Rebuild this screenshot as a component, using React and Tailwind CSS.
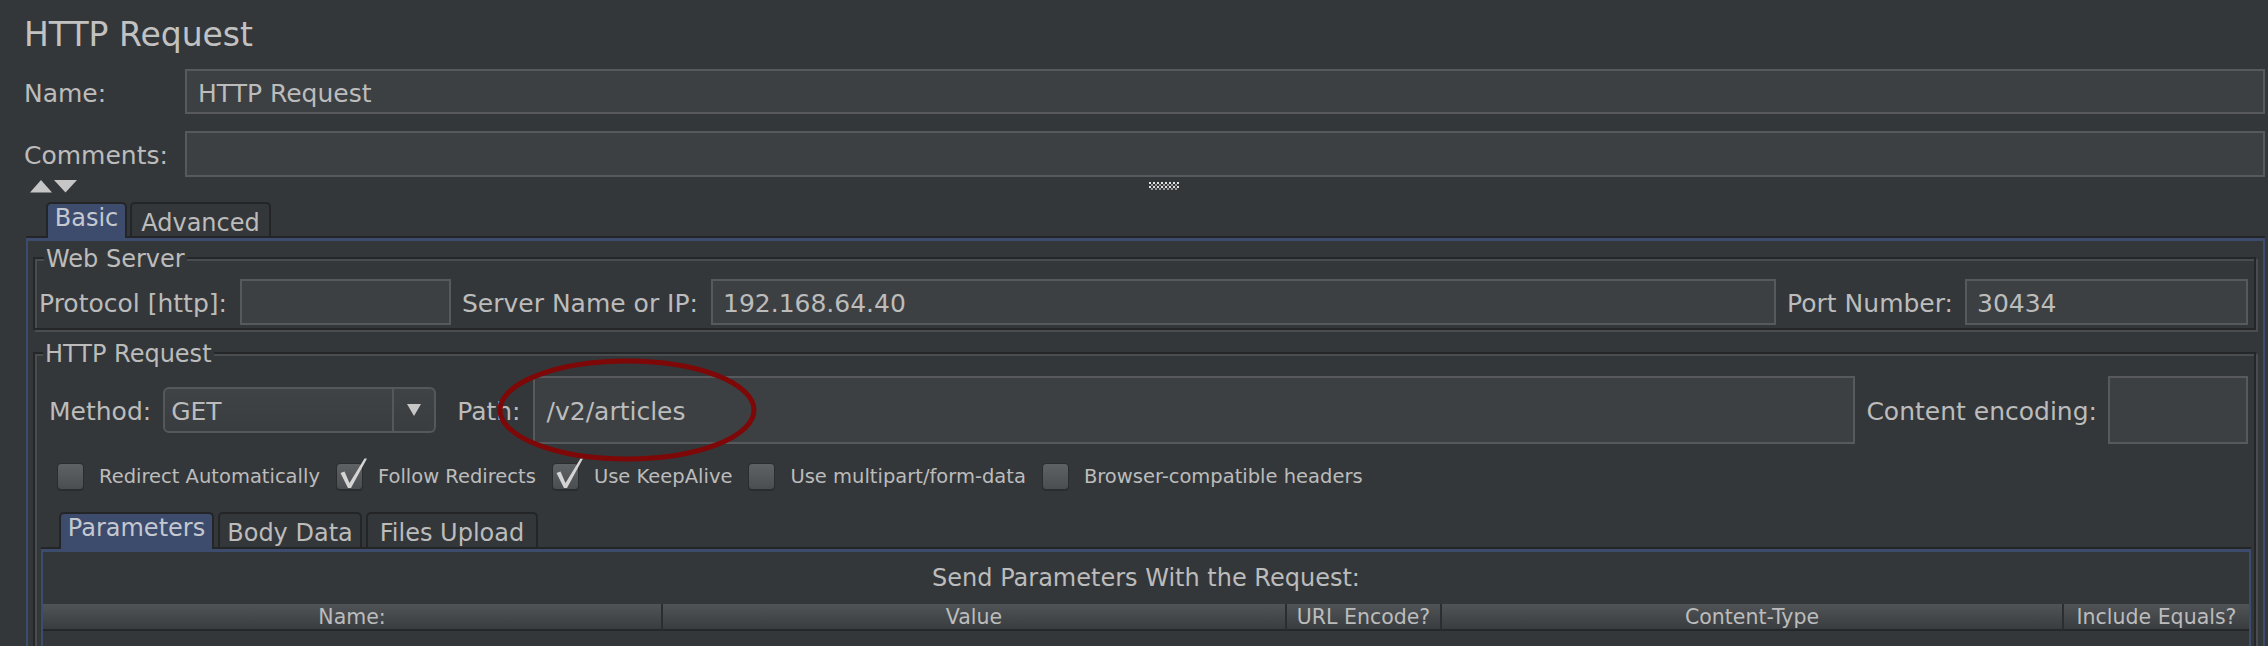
import React from 'react';

const Field = ({ className = '', children }) => (
  <div className={`flex items-center border-2 border-[#57595c] bg-[#3d4043] pl-[10px] pt-[4px] text-[25px] leading-[28px] ${className}`}>
    {children}
  </div>
);

const Label = ({ className = '', children }) => (
  <span className={`whitespace-nowrap pt-[4px] text-[25px] leading-[28px] ${className}`}>{children}</span>
);

const Group = ({ title, titleLeft, className = '', children }) => (
  <div className={`relative border-2 border-[#242628] shadow-[2px_2px_0_#4a4d50,inset_2px_2px_0_#4a4d50] ${className}`}>
    <span className={`absolute -top-[14px] ${titleLeft} bg-[#34373a] px-[2px] text-[24px] leading-[28px]`}>{title}</span>
    {children}
  </div>
);

const Tab = ({ active, className = '', children }) => (
  <div
    className={`flex shrink-0 justify-center rounded-t-[5px] border-2 border-b-0 border-[#232527] text-[24px] leading-[28px] ${
      active ? 'h-[36px] bg-[#3d4b6c] pt-0 text-[#c4c8d0]' : 'h-[34px] pt-[5px]'
    } ${className}`}
  >
    {children}
  </div>
);

const Check = ({ checked, label }) => (
  <div className="flex items-center gap-[15px]">
    <div className="relative h-[27px] w-[27px] rounded-[4px] border border-[#2a2c2e] bg-gradient-to-b from-[#5f6265] to-[#4b4e51] shadow-[0_1px_0_#292b2d]">
      {checked && (
        <svg className="absolute -top-[6px] left-0 overflow-visible" width="30" height="32" viewBox="0 0 30 32">
          <path d="M3.5 15 L7.5 13.5 L12.5 25 L27.5 0.5 L30 0.5 L14 30 L11 30 Z" fill="#d4d4d4" />
        </svg>
      )}
    </div>
    <span className="whitespace-nowrap pt-[2px] text-[19.5px] leading-[24px]">{label}</span>
  </div>
);

const Handle = () => {
  const cells = [];
  for (let r = 0; r < 4; r++) {
    for (let c = 0; c < 15; c++) {
      if ((r + c) % 2 === 0) cells.push(<rect key={`${r}-${c}`} x={c * 2} y={r * 2} width="2" height="2" fill={r % 2 ? '#9a9a9a' : '#e2e2e2'} />);
    }
  }
  return (
    <svg width="30" height="8" viewBox="0 0 30 8" className="ml-[1071px] mt-[5px]">
      {cells}
    </svg>
  );
};

export default function App() {
  return (
    <div className="relative h-[646px] w-[2268px] overflow-hidden bg-[#34373a] font-['DejaVu_Sans',sans-serif] text-[#bcbcbc]">
      <div className="pl-[24px] pr-[3px] pt-[15px]">
        <h1 className="h-[40px] text-[33px] leading-[40px] text-[#c2c2c2]">HTTP Request</h1>

        <div className="mt-[14px] flex h-[45px] items-center">
          <Label className="w-[161px]">Name:</Label>
          <Field className="h-full flex-1 pl-[11px]">HTTP Request</Field>
        </div>

        <div className="mt-[17px] flex h-[46px] items-center">
          <Label className="w-[161px]">Comments:</Label>
          <Field className="h-full flex-1" />
        </div>

        {/* split pane divider */}
        <div className="flex h-[25px] items-start">
          <svg width="48" height="13" viewBox="0 0 48 13" className="ml-[6px] mt-[3px]">
            <polygon points="0,12.5 11,0 22,12.5" fill="#c6c6c6" />
            <polygon points="24,0 47,0 35.5,12.5" fill="#c6c6c6" />
          </svg>
          <Handle />
        </div>

        {/* Basic / Advanced */}
        <div className="ml-[2px]">
          <div className="flex h-[36px] items-start gap-[3px] border-b-2 border-[#232527] pl-[20px]">
            <Tab active className="w-[81px]">Basic</Tab>
            <Tab className="w-[141px]">Advanced</Tab>
          </div>

          <div className="h-[420px] border-x-2 border-t-[3px] border-[#3d4b6c] pl-[5px] pr-[7px] pt-[16px]">
            <Group title="Web Server" titleLeft="left-[9px]" className="pb-[3px] pl-[4px] pr-[6px] pt-[20px]">
              <div className="flex h-[46px] items-center">
                <Label>Protocol [http]:</Label>
                <Field className="ml-[13px] h-full w-[211px]" />
                <Label className="ml-[11px]">Server Name or IP:</Label>
                <Field className="ml-[13px] h-full flex-1">192.168.64.40</Field>
                <Label className="ml-[11px]">Port Number:</Label>
                <Field className="ml-[12px] h-full w-[283px]">30434</Field>
              </div>
            </Group>

            <Group title="HTTP Request" titleLeft="left-[8px]" className="mt-[22px] h-[400px] pr-[3px] pt-[22px]">
              <div className="flex h-[68px] items-center pl-[14px] pr-[3px]">
                <Label>Method:</Label>
                <div className="ml-[12px] flex h-[46px] w-[273px] rounded-[6px] border-2 border-[#55585b] bg-gradient-to-b from-[#404346] to-[#3a3d40]">
                  <div className="flex flex-1 items-center pl-[6px] pt-[4px] text-[25px] leading-[28px]">GET</div>
                  <div className="flex w-[42px] items-center justify-center border-l-2 border-[#55585b]">
                    <svg width="14" height="12" viewBox="0 0 14 12">
                      <polygon points="0,0 14,0 7,12" fill="#c6c6c6" />
                    </svg>
                  </div>
                </div>
                <Label className="ml-[21px]">Path:</Label>
                <Field className="ml-[12px] h-full flex-1 pl-[12px]">/v2/articles</Field>
                <Label className="ml-[11px]">Content encoding:</Label>
                <Field className="ml-[11px] h-full w-[140px]" />
              </div>

              <div className="mt-[18px] flex h-[28px] items-center gap-[16px] pl-[22px]">
                <Check label="Redirect Automatically" />
                <Check checked label="Follow Redirects" />
                <Check checked label="Use KeepAlive" />
                <Check label="Use multipart/form-data" />
                <Check label="Browser-compatible headers" />
              </div>

              {/* Parameters / Body Data / Files Upload */}
              <div className="ml-[6px] mt-[22px]">
                <div className="flex h-[37px] items-start gap-[4px] border-b-2 border-[#232527] pl-[18px]">
                  <Tab active className="h-[37px] w-[155px]">Parameters</Tab>
                  <Tab className="h-[35px] w-[144px]">Body Data</Tab>
                  <Tab className="h-[35px] w-[172px]">Files Upload</Tab>
                </div>
                <div className="h-[200px] border-x-2 border-t-[3px] border-[#3d4b6c]">
                  <div className="mt-[12px] text-center text-[24px] leading-[28px]">Send Parameters With the Request:</div>
                  <div className="mt-[12px] grid h-[27px] grid-cols-[620px_624px_155px_622px_1fr] border-b-2 border-[#25272a] bg-gradient-to-b from-[#505457] to-[#3a3d40] text-[20.5px] leading-[25px]">
                    <div className="border-r-2 border-[#2b2d30] pt-[1px] text-center">Name:</div>
                    <div className="border-r-2 border-[#2b2d30] pt-[1px] text-center">Value</div>
                    <div className="border-r-2 border-[#2b2d30] pt-[1px] text-center">URL Encode?</div>
                    <div className="border-r-2 border-[#2b2d30] pt-[1px] text-center">Content-Type</div>
                    <div className="pt-[1px] text-center">Include Equals?</div>
                  </div>
                </div>
              </div>
            </Group>
          </div>
        </div>
      </div>

      {/* red annotation around the path */}
      <svg className="absolute left-[496px] top-[356px]" width="264" height="108" viewBox="0 0 264 108">
        <ellipse cx="131" cy="54" rx="127" ry="49" fill="none" stroke="#7e0707" strokeWidth="5" />
      </svg>
    </div>
  );
}
